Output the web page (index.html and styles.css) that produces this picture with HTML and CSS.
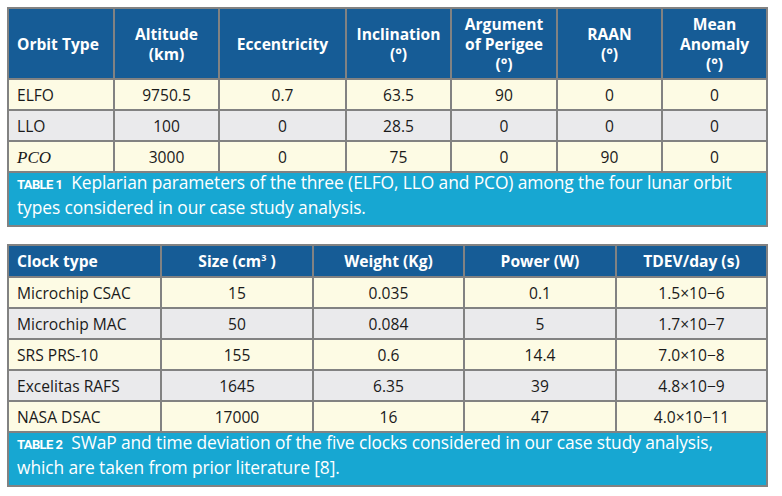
FILE: index.html
```html
<!DOCTYPE html>
<html>
<head>
<meta charset="utf-8">
<link rel="stylesheet" href="styles.css">
</head>
<body>
<div class="page">
<table class="tbl t1">
  <colgroup>
    <col style="width:106px"><col style="width:105px"><col style="width:127px"><col style="width:105px"><col style="width:106px"><col style="width:105px"><col style="width:105px">
  </colgroup>
  <thead>
    <tr class="head h1">
      <th class="left">Orbit Type</th>
      <th>Altitude<br>(km)</th>
      <th>Eccentricity</th>
      <th>Inclination<br>(°)</th>
      <th>Argument<br>of Perigee<br>(°)</th>
      <th>RAAN<br>(°)</th>
      <th>Mean<br>Anomaly<br>(°)</th>
    </tr>
  </thead>
  <tbody>
    <tr class="odd"><td class="left">ELFO</td><td>9750.5</td><td>0.7</td><td>63.5</td><td>90</td><td>0</td><td>0</td></tr>
    <tr class="even"><td class="left">LLO</td><td>100</td><td>0</td><td>28.5</td><td>0</td><td>0</td><td>0</td></tr>
    <tr class="odd"><td class="left"><span class="math">PCO</span></td><td>3000</td><td>0</td><td>75</td><td>0</td><td>90</td><td>0</td></tr>
    <tr class="cap"><td colspan="7"><div class="captext"><div class="capline"><span class="label">TABLE 1</span><span class="captitle">Keplarian parameters of the three (ELFO, LLO and PCO) among the four lunar orbit</span></div><div class="capline">types considered in our case study analysis.</div></div></td></tr>
  </tbody>
</table>

<table class="tbl t2">
  <colgroup>
    <col style="width:153px"><col style="width:152px"><col style="width:151px"><col style="width:152px"><col style="width:151px">
  </colgroup>
  <thead>
    <tr class="head h2">
      <th class="left">Clock type</th>
      <th>Size (cm<sup>3</sup> )</th>
      <th>Weight (Kg)</th>
      <th>Power (W)</th>
      <th>TDEV/day (s)</th>
    </tr>
  </thead>
  <tbody>
    <tr class="odd"><td class="left">Microchip CSAC</td><td>15</td><td>0.035</td><td>0.1</td><td>1.5×10−6</td></tr>
    <tr class="even"><td class="left">Microchip MAC</td><td>50</td><td>0.084</td><td>5</td><td>1.7×10−7</td></tr>
    <tr class="odd"><td class="left">SRS PRS-10</td><td>155</td><td>0.6</td><td>14.4</td><td>7.0×10−8</td></tr>
    <tr class="even"><td class="left">Excelitas RAFS</td><td>1645</td><td>6.35</td><td>39</td><td>4.8×10−9</td></tr>
    <tr class="odd"><td class="left">NASA DSAC</td><td>17000</td><td>16</td><td>47</td><td>4.0×10−11</td></tr>
    <tr class="cap"><td colspan="5"><div class="captext"><div class="capline"><span class="label">TABLE 2</span><span class="captitle">SWaP and time deviation of the five clocks considered in our case study analysis,</span></div><div class="capline">which are taken from prior literature [8].</div></div></td></tr>
  </tbody>
</table>
</div>
</body>
</html>
```

FILE: styles.css
```css
html, body {
  margin: 0;
  padding: 0;
  background: #ffffff;
}
.page {
  padding: 7px 0 0 7px;
  font-family: "Open Sans", "Noto Sans", sans-serif;
}
.tbl {
  border-collapse: collapse;
  table-layout: fixed;
  width: 760px;
  border: 2px solid #8a8a8a;
}
.t2 {
  margin-top: 17px;
}
.tbl th, .tbl td {
  border: 2px solid #828282;
  padding: 0 8px;
  text-align: center;
  font-size: 15.6px;
  color: #1a1a1a;
  white-space: nowrap;
}
.tbl .left {
  text-align: left;
}
.head th {
  background: #165c96;
  color: #ffffff;
  font-weight: 700;
  line-height: 20px;
}
.h1 {
  height: 71px;
}
.h2 {
  height: 32px;
}
.head sup {
  font-size: 9px;
  vertical-align: 6px;
  line-height: 0;
}
.tbl tbody tr {
  height: 31px;
}
.odd td {
  background: #fdfbe4;
}
.even td {
  background: #eaeaec;
}
.math {
  font-family: "Liberation Serif", serif;
  font-style: italic;
  font-size: 17px;
}
.tbl tr.cap {
  height: 54px;
}
.tbl .cap td {
  background: #17a7d2;
  vertical-align: top;
  padding: 0 8px;
}
.captext {
  color: #ffffff;
  text-align: left;
  font-size: 17.4px;
  line-height: 23px;
  letter-spacing: -0.1px;
  margin-top: -2px;
}
.capline {
  display: flex;
  align-items: baseline;
  white-space: nowrap;
}
.label {
  font-family: "Roboto", sans-serif;
  font-weight: 700;
  font-size: 13px;
  letter-spacing: -0.6px;
  margin-right: 9px;
}
```
